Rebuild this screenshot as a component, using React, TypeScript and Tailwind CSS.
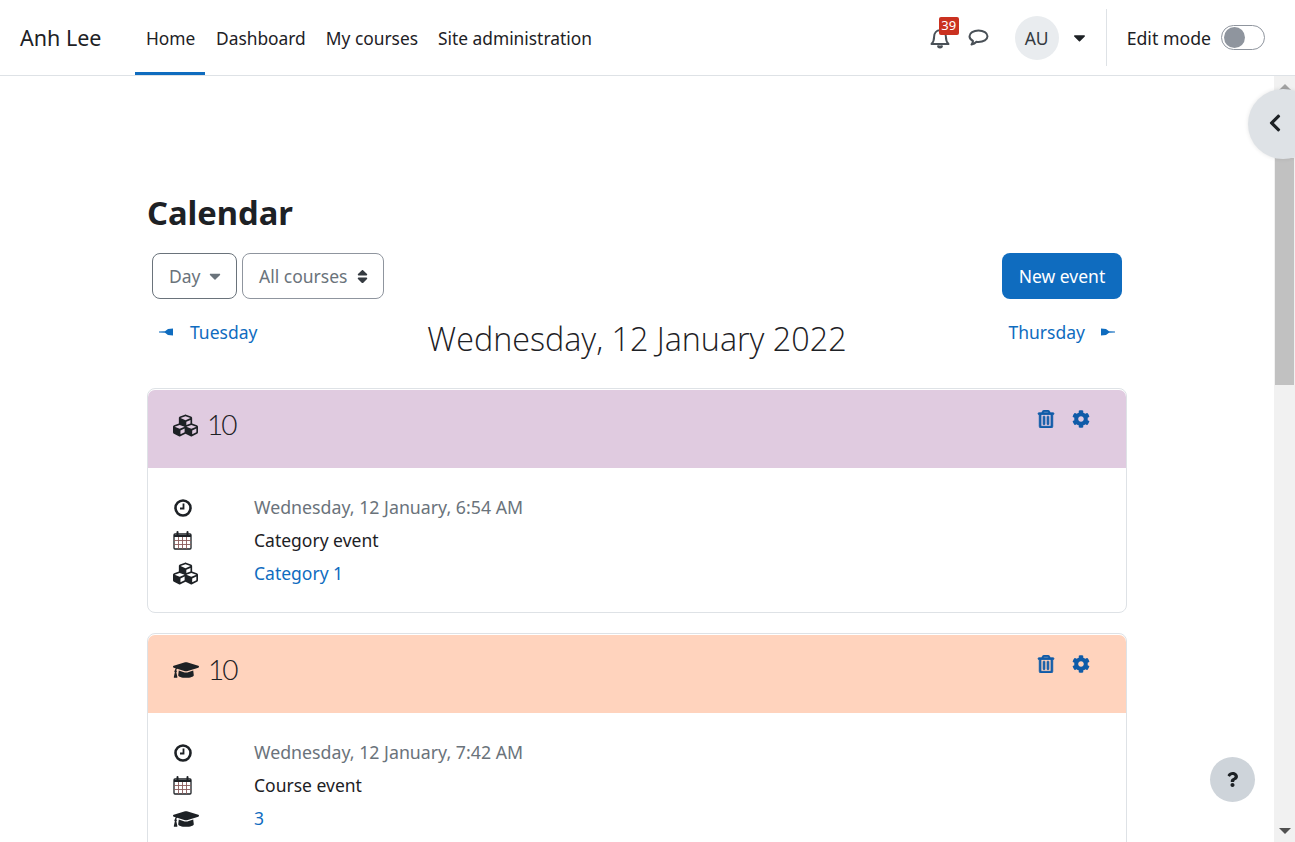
import { FaCaretDown, FaChevronLeft, FaCog, FaCubes, FaGraduationCap, FaQuestion, FaRegTrashAlt, FaSort } from "react-icons/fa";

// Thin outline icons, the icon packs only have heavier ones
function BellIcon() {
  return (
    <svg viewBox="0 0 20 22" className="h-[22px] w-[20px]" fill="none" stroke="#495057" strokeWidth="2">
      <path d="M1.5 17c2-1.8 2.6-4 2.6-7.2C4.1 6 6.6 3.2 10 3.2s5.900 2.800 5.900 6.600c0 3.200.6 5.400 2.600 7.200z" strokeLinejoin="round" />
      <path d="M8 18.500c0 2.500 4 2.500 4 0" fill="#495057" />
    </svg>
  );
}

function CommentIcon() {
  return (
    <svg viewBox="0 0 21 18" className="h-[18px] w-[21px]" fill="none" stroke="#495057" strokeWidth="2">
      <path d="M10.500 1.500c-5 0-9 2.500-9 5.800 0 2 1.400 3.700 3.500 4.700-.2 1.300-.7 2.500-1.500 3.500 2-.4 3.800-1.400 5-2.700.6.100 1.300.2 2 .2 5 0 9-2.500 9-5.700s-4-5.800-9-5.800z" strokeLinejoin="round" />
    </svg>
  );
}

function ClockIcon() {
  return (
    <svg viewBox="0 0 18 18" className="h-[18px] w-[18px]" fill="none" stroke="#1d2125">
      <circle cx="9" cy="9" r="7.500" strokeWidth="2.600" />
      <path d="M9.500 4.500v5h-3.500" strokeWidth="1.800" />
    </svg>
  );
}

function CalendarIcon() {
  return (
    <svg viewBox="0 0 19 19" className="h-[19px] w-[19px]" fill="none" stroke="#1d2125">
      <rect x="1" y="3" width="17" height="15" rx="1" strokeWidth="1.300" />
      <path d="M1 5h17" strokeWidth="2" />
      <path d="M4.500 1v3.500M14.500 1v3.500" stroke="#1d2125" strokeWidth="2" strokeLinecap="round" />
      <path d="M1 9.500h17M1 13.500h17M5.500 6v12M9.500 6v12M13.500 6v12" strokeWidth=".9" stroke="#8a5a5a" />
    </svg>
  );
}

function ArrowIcon({ flip }: { flip?: boolean }) {
  return (
    <svg viewBox="0 0 14 8" className={flip ? "h-[8px] w-[14px] rotate-180" : "h-[8px] w-[14px]"} fill="#0f6cbf">
      <path d="M0 3.500L6 3.300 9 1l5-.5v7L9 7 6 4.700 0 4.500z" />
    </svg>
  );
}

function EventRow({ icon, children }: { icon: React.ReactNode; children: React.ReactNode }) {
  return (
    <div className="flex h-[33px] items-center">
      <div className="flex w-[81px] items-center">{icon}</div>
      {children}
    </div>
  );
}

function EventCard({ color, icon, time, type, link }: { color: string; icon: React.ReactNode; time: string; type: string; link: string }) {
  return (
    <div className="mb-[20px] rounded-[8px] border border-[#dee2e6] bg-white pt-px">
      <div className={color + " flex h-[78px] justify-between rounded-t-[7px] pl-[25px] pr-[36px]"}>
        <div className="flex h-[70px] items-center gap-[9px] text-[#1d2125]">
          {icon}
          <span className="pb-[2px] text-[28px] font-light leading-none tracking-[-2px] [font-family:Lato,sans-serif]">10</span>
        </div>
        <div className="flex h-[58px] items-center gap-[17px] text-[#0f5ba8]">
          <FaRegTrashAlt size={18} stroke="currentColor" strokeWidth={24} />
          <FaCog size={18} />
        </div>
      </div>
      <div className="px-[25px] pb-[22px] pt-[23px]">
        <EventRow icon={<span className="pl-[1px]"><ClockIcon /></span>}>
          <span className="text-[17.750px] text-[#6a737b]">{time}</span>
        </EventRow>
        <EventRow icon={<CalendarIcon />}>
          <span className="text-[#1d2125]">{type}</span>
        </EventRow>
        <EventRow icon={icon}>
          <a className="text-[#0f6cbf]">{link}</a>
        </EventRow>
      </div>
    </div>
  );
}

export default function App() {
  return (
    <div className="relative flex h-[842px] w-[1295px] flex-col overflow-hidden bg-white text-[17.500px] text-[#1d2125] [font-family:'Noto_Sans',sans-serif]">
      <header className="flex h-[76px] shrink-0 items-center border-b border-[#dee2e6] pl-[20px] pr-[30px]">
        <span className="w-[115px] pt-[2px] text-[21.500px]">Anh Lee</span>
        <nav className="flex h-full items-center text-[17.350px]">
          <a className="flex h-full w-[70px] items-center border-b-[3px] border-[#0f6cbf] pl-[11px] pt-[4px]">Home</a>
          <a className="ml-px flex h-full items-center px-[10px] pt-[2px]">Dashboard</a>
          <a className="flex h-full items-center px-[10px] pt-[2px]">My courses</a>
          <a className="flex h-full items-center px-[10px] pt-[2px]">Site administration</a>
        </nav>
        <div className="ml-auto flex h-full items-center">
          <div className="relative mr-[18px]">
            <BellIcon />
            <span className="absolute left-[9px] top-[-10px] flex h-[18px] w-[20px] items-center justify-center rounded-[2px] bg-[#ca3120] text-[13px] text-white">39</span>
          </div>
          <CommentIcon />
          <div className="ml-[26px] flex h-[44px] w-[44px] items-center justify-center rounded-full bg-[#e9ecef] pt-[2px] text-[#343a40]">AU</div>
          <FaCaretDown className="ml-[11px]" size={19} />
          <div className="ml-[17px] h-[57px] w-px bg-[#dee2e6]" />
          <span className="ml-[20px] pt-[2px] text-[17.700px]">Edit mode</span>
          <div className="ml-[10px] flex h-[25px] w-[44px] items-center rounded-full border border-[#8f959e] pl-[2px]">
            <div className="h-[21px] w-[21px] rounded-full bg-[#8f959e]" />
          </div>
        </div>
      </header>

      <div className="flex min-h-0 flex-1">
        <main className="min-w-0 flex-1 overflow-hidden pl-[147px] pr-[147px] pt-[114px]">
          <h1 className="h-[63px] text-[32.700px] font-bold leading-[46px]">Calendar</h1>
          <div className="flex items-start justify-between px-[5px]">
            <div className="flex gap-[5px] text-[#6a737b]">
              <div className="flex h-[46px] w-[85px] items-center gap-[5px] rounded-[8px] border border-[#6a737b] pl-[16px]">
                Day <FaCaretDown size={18} />
              </div>
              <div className="flex h-[46px] w-[142px] items-center gap-[7px] rounded-[8px] border border-[#8f959e] pl-[16px]">
                All courses <FaSort size={17} className="text-[#343a40]" />
              </div>
            </div>
            <button className="flex h-[46px] w-[120px] items-center justify-center rounded-[8px] bg-[#0f6cbf] text-white">New event</button>
          </div>
          <div className="relative flex h-[89px] items-start justify-between px-[12px] pt-[19px] text-[#0f6cbf]">
            <a className="flex items-center gap-[17px] leading-[28px]"><ArrowIcon /> Tuesday</a>
            <h2 className="pl-[8px] text-[32.300px] font-light leading-[40px] text-[#1d2125] [font-family:'Open_Sans',sans-serif]">Wednesday, 12 January 2022</h2>
            <a className="flex items-center gap-[16px] leading-[28px]">Thursday <ArrowIcon flip /></a>
          </div>
          <EventCard
            color="bg-[#e0cbe0]"
            icon={<FaCubes size={25} className="text-[#1d2125]" />}
            time="Wednesday, 12 January, 6:54 AM"
            type="Category event"
            link="Category 1"
          />
          <EventCard
            color="bg-[#ffd3bd]"
            icon={<FaGraduationCap size={26} className="text-[#1d2125]" />}
            time="Wednesday, 12 January, 7:42 AM"
            type="Course event"
            link="3"
          />
        </main>

        <div className="flex w-[21px] shrink-0 flex-col items-center bg-[#f1f1f1]">
          <div className="mt-[8px] h-0 w-0 border-x-[6px] border-b-[6px] border-x-transparent border-b-[#a3a3a3]" />
          <div className="mt-[68px] h-[227px] w-[19px] bg-[#c1c1c1]" />
          <div className="mb-[8px] mt-auto h-0 w-0 border-x-[6px] border-t-[6px] border-x-transparent border-t-[#505050]" />
        </div>
      </div>

      <button className="absolute left-[1248px] top-[89px] flex h-[70px] w-[70px] items-center rounded-full bg-[#dee2e6] pb-[2px] pl-[17px] shadow-[0_0_4px_rgba(0,0,0,0.1)]">
        <FaChevronLeft size={20} />
      </button>
      <button className="absolute left-[1210px] top-[757px] flex h-[45px] w-[45px] items-center justify-center rounded-full bg-[#ced4da]">
        <FaQuestion size={15} />
      </button>
    </div>
  );
}
